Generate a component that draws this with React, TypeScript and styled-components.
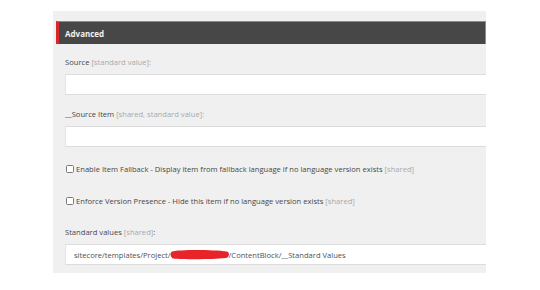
import React from "react";
import styled, { createGlobalStyle } from "styled-components";

const Global = createGlobalStyle`
  html, body { margin: 0; padding: 0; background: #ffffff; }
  body { font-family: "Open Sans", "Liberation Sans", sans-serif; }
`;

const Page = styled.div`
  width: 540px;
  height: 290px;
  padding: 11px 0 0 53px;
  box-sizing: border-box;
  overflow: hidden;
`;

const Panel = styled.section`
  width: 433px;
  height: 262px;
  background: #f0f0f0;
  padding-top: 10px;
  box-sizing: border-box;
  display: flex;
  flex-direction: column;
  overflow: hidden;
`;

const Header = styled.div`
  margin-left: 3px;
  height: 23px;
  box-sizing: border-box;
  background: #474747;
  border-left: 3px solid #d9282b;
  border-top: 1px solid #8c8c8c;
  border-right: 1px solid #8c8c8c;
  display: flex;
  align-items: center;
  padding-left: 6px;
  color: #f2f2f2;
  font-size: 8px;
  font-weight: 700;
`;

const Body = styled.div`
  display: flex;
  flex-direction: column;
  padding-left: 12px;
`;

const Field = styled.div<{ $top: number }>`
  display: flex;
  flex-direction: column;
  margin-top: ${(p) => p.$top}px;
`;

const Label = styled.div`
  font-size: 7.6px;
  line-height: 11px;
  color: #474747;
  margin-bottom: 6px;
  white-space: nowrap;
`;

const Note = styled.span`
  color: #a8a8a8;
`;

const Input = styled.div`
  height: 21px;
  box-sizing: border-box;
  background: #ffffff;
  border-top: 1px solid #dcdcdc;
  border-bottom: 1px solid #dcdcdc;
  border-left: 1px solid #e4e4e4;
  display: flex;
  align-items: center;
  padding-left: 8px;
  font-size: 7.6px;
  color: #505050;
  white-space: nowrap;
`;

const CheckRow = styled.label<{ $top: number }>`
  display: flex;
  align-items: center;
  gap: 2px;
  margin-top: ${(p) => p.$top}px;
  margin-left: 1px;
  height: 11px;
  font-size: 7.6px;
  color: #474747;
  white-space: nowrap;
`;

const Box = styled.span`
  width: 6px;
  height: 6px;
  border: 1px solid #7a7a7a;
  border-radius: 1.5px;
  background: #ffffff;
  flex: none;
`;

const Redact = styled.svg`
  display: inline-block;
  vertical-align: middle;
  margin: 0 -1px;
`;

export default function App() {
  return (
    <>
      <Global />
      <Page>
        <Panel>
          <Header>Advanced</Header>
          <Body>
            <Field $top={13}>
              <Label>
                Source <Note>[standard value]:</Note>
              </Label>
              <Input />
            </Field>
            <Field $top={14}>
              <Label>
                __Source Item <Note>[shared, standard value]:</Note>
              </Label>
              <Input />
            </Field>
            <CheckRow $top={16}>
              <Box />
              <span>
                Enable Item Fallback - Display item from fallback language if no language version exists{" "}
                <Note>[shared]</Note>
              </span>
            </CheckRow>
            <CheckRow $top={21}>
              <Box />
              <span>
                Enforce Version Presence - Hide this item if no language version exists <Note>[shared]</Note>
              </span>
            </CheckRow>
            <Field $top={21}>
              <Label>
                Standard values <Note>[shared]</Note>:
              </Label>
              <Input>
                sitecore/templates/Project/
                <Redact width="60" height="11" viewBox="0 0 60 11">
                  <path
                    d="M2 2.5 C10 0.5 42 0.5 57 2.5 C60 4 59.5 8 56 9 C42 10.5 14 10.5 3 9.5 C0 8 0 4 2 2.5 Z"
                    fill="#e8232a"
                  />
                </Redact>
                /ContentBlock/__Standard Values
              </Input>
            </Field>
          </Body>
        </Panel>
      </Page>
    </>
  );
}
